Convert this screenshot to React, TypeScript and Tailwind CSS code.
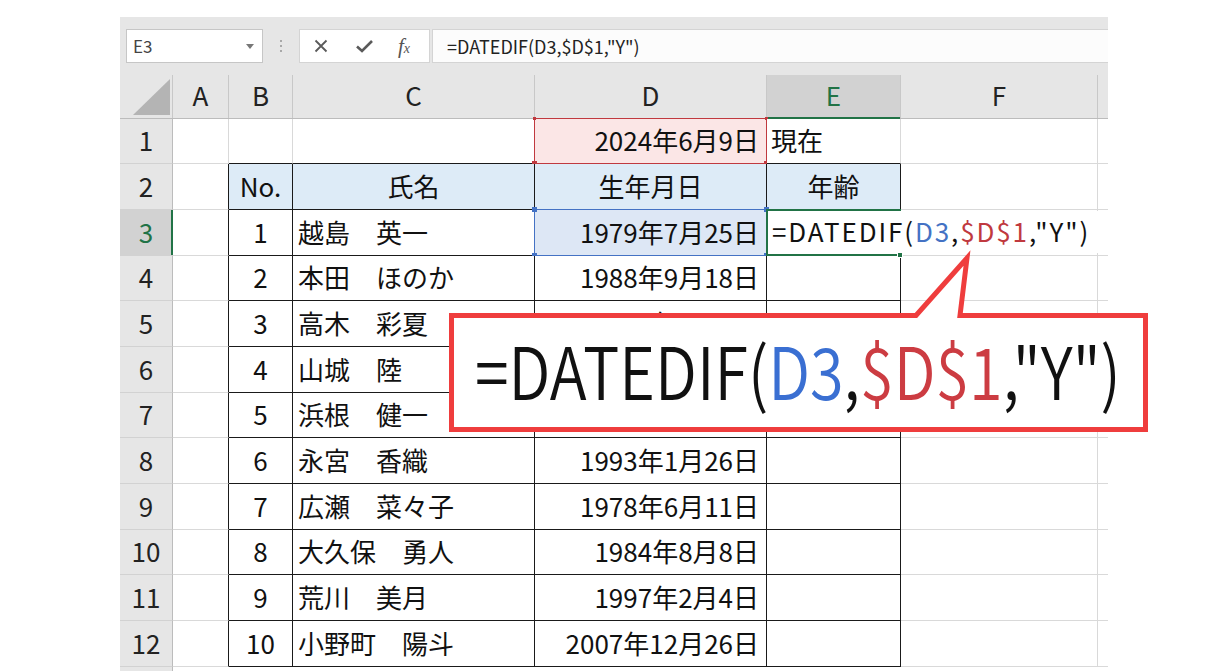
import React from "react";

const colW = ["w-[53px]", "w-[56px]", "w-[64px]", "w-[242px]", "w-[232px]", "w-[134px]", "w-[197px]", "w-[10px]"];
const rowH = ["h-[45px]", "h-[46px]", "h-[46px]", "h-[45px]", "h-[46px]", "h-[46px]", "h-[45px]", "h-[46px]", "h-[46px]", "h-[45px]", "h-[46px]", "h-[46px]"];
const letters = ["A", "B", "C", "D", "E", "F", ""];

const names = ["越島　英一", "本田　ほのか", "高木　彩夏", "山城　陸", "浜根　健一", "永宮　香織", "広瀬　菜々子", "大久保　勇人", "荒川　美月", "小野町　陽斗"];
const dates = ["1979年7月25日", "1988年9月18日", "1975年3月8日", "", "", "1993年1月26日", "1978年6月11日", "1984年8月8日", "1997年2月4日", "2007年12月26日"];

const inTable = (r: number, c: number) => r >= 2 && r <= 12 && c >= 2 && c <= 5;

function Formula({ big }: { big?: boolean }) {
  return (
    <>
      <span>=DATEDIF(</span>
      <span className={big ? "text-[#3a6fd2]" : "text-[#4472c4]"}>D3</span>
      <span>,</span>
      <span className={big ? "text-[#cc3c42]" : "text-[#c0393f]"}>$D$1</span>
      <span>,"Y")</span>
    </>
  );
}

function CellContent({ r, c }: { r: number; c: number }) {
  if (r === 1 && c === 4) return <div className="flex h-full items-center justify-end pb-[3px] pr-[7px]">2024年6月9日</div>;
  if (r === 1 && c === 5) return <div className="flex h-full items-center pb-[3px] pl-[4px]">現在</div>;
  if (r === 2) {
    const t = ["", "", "No.", "氏名", "生年月日", "年齢"][c] || "";
    return <div className="flex h-full items-center justify-center pb-[3px]">{t}</div>;
  }
  if (r >= 3) {
    const i = r - 3;
    if (c === 2) return <div className="flex h-full items-center justify-center pb-[3px]">{i + 1}</div>;
    if (c === 3) return <div className="flex h-full items-center whitespace-nowrap pb-[3px] pl-[5px]">{names[i]}</div>;
    if (c === 4 && dates[i]) return <div className="flex h-full items-center justify-end whitespace-nowrap pb-[3px] pr-[7px]">{dates[i]}</div>;
  }
  return null;
}

function Cell({ r, c }: { r: number; c: number }) {
  const rb = inTable(r, c) || inTable(r, c + 1);
  const bb = inTable(r, c) || inTable(r + 1, c);
  let bg = "bg-white";
  if (r === 2 && c >= 2 && c <= 5) bg = "bg-[#ddebf7]";
  if (r === 1 && c === 4) bg = "bg-[#fbe6e6]";
  if (r === 3 && c === 4) bg = "bg-[#dde7f5]";
  const isLast = c === 7;
  return (
    <div
      className={`${colW[c]} ${rowH[r - 1]} ${bg} relative shrink-0 border-b ${isLast ? "" : "border-r"} ${rb ? "border-r-[#1a1a1a]" : "border-r-[#d9d9d9]"} ${bb ? "border-b-[#1a1a1a]" : "border-b-[#d9d9d9]"}`}
    >
      <CellContent r={r} c={c} />
      {r === 1 && c === 4 && (
        <div className="pointer-events-none absolute -left-px -top-px -right-px -bottom-px border border-[#c0393f]">
          <div className="absolute -left-[3px] -bottom-[3px] h-[5px] w-[5px] bg-[#c0393f]" />
          <div className="absolute -right-[3px] -bottom-[3px] h-[5px] w-[5px] bg-[#c0393f]" />
          <div className="absolute -left-[2px] -top-[2px] h-[3px] w-[3px] bg-[#c0393f]" />
          <div className="absolute -right-[2px] -top-[2px] h-[3px] w-[3px] bg-[#c0393f]" />
        </div>
      )}
      {r === 3 && c === 4 && (
        <div className="pointer-events-none absolute -left-px -top-px -right-px -bottom-px border border-[#4472c4]">
          <div className="absolute -left-[3px] -top-[3px] h-[5px] w-[5px] bg-[#4472c4]" />
          <div className="absolute -right-[3px] -top-[3px] h-[5px] w-[5px] bg-[#4472c4]" />
          <div className="absolute -left-[3px] -bottom-[3px] h-[5px] w-[5px] bg-[#4472c4]" />
          <div className="absolute -right-[3px] -bottom-[3px] h-[5px] w-[5px] bg-[#4472c4]" />
        </div>
      )}
      {r === 3 && c === 5 && (
        <>
          <div className="pointer-events-none absolute -left-px -top-px -right-px -bottom-px z-10 border-2 border-[#217346]">
            <div className="absolute -right-[4px] -bottom-[4px] h-[6px] w-[6px] border border-white bg-[#217346]" />
          </div>
          <div className="absolute left-[1px] top-[1px] z-20 flex h-[42px] items-center whitespace-nowrap bg-white pb-[3px] pl-[4px] pr-[8px] tracking-[1.9px]">
            <Formula />
          </div>
        </>
      )}
    </div>
  );
}

export default function App() {
  const font = "font-['Noto_Sans_CJK_JP','Noto_Sans',sans-serif]";
  return (
    <div className={`relative h-[671px] w-[1229px] overflow-hidden bg-white pl-[120px] pt-[17px] ${font}`}>
      <div className="w-[988px] bg-[#e6e6e6]">
        {/* formula bar */}
        <div className="flex h-[58px] items-start pt-[12px]">
          <div className="ml-[6px] flex h-[34px] w-[137px] items-center justify-between border border-[#c6c6c6] bg-white pl-[6px] pr-[8px] text-[17px] text-[#444]">
            <span>E3</span>
            <svg width="8" height="5" viewBox="0 0 8 5"><path d="M0 0 L8 0 L4 5 Z" fill="#777" /></svg>
          </div>
          <div className="flex h-[34px] w-[36px] flex-col items-center justify-center gap-[3px]">
            <div className="h-[2px] w-[2px] bg-[#a8a8a8]" />
            <div className="h-[2px] w-[2px] bg-[#a8a8a8]" />
            <div className="h-[2px] w-[2px] bg-[#a8a8a8]" />
          </div>
          <div className="flex h-[34px] w-[131px] items-center border border-[#d4d4d4] bg-white">
            <svg className="ml-[14px]" width="14" height="14" viewBox="0 0 14 14">
              <path d="M1.5 1.5 L12.5 12.5 M12.5 1.5 L1.5 12.5" stroke="#5a5a5a" strokeWidth="1.8" />
            </svg>
            <svg className="ml-[28px]" width="17" height="14" viewBox="0 0 17 14">
              <path d="M1 7.5 L6 12 L16 2" stroke="#5a5a5a" strokeWidth="2.6" fill="none" />
            </svg>
            <span className="ml-[25px] font-['Liberation_Serif',serif] text-[21px] italic leading-none text-[#555]">
              f<span className="text-[14px]">x</span>
            </span>
          </div>
          <div className="ml-[2px] flex h-[34px] flex-1 items-center border-y border-l border-[#d4d4d4] bg-[#fcfcfc] pl-[14px] text-[18px] text-[#222]">
            =DATEDIF(D3,$D$1,"Y")
          </div>
        </div>
        {/* column header */}
        <div className="flex h-[44px] border-b border-[#bcbcbc] text-[26px] text-[#222]">
          <div className="relative w-[53px] shrink-0 border-r border-[#c8c8c8]">
            <svg className="absolute right-[2px] bottom-[3px]" width="37" height="36" viewBox="0 0 37 36">
              <path d="M37 0 L37 36 L0 36 Z" fill="#b4b4b4" />
            </svg>
          </div>
          {letters.map((l, i) => (
            <div
              key={i}
              className={`${colW[i + 1]} relative flex shrink-0 items-center justify-center pb-[4px] ${i < 6 ? "border-r border-[#c8c8c8]" : ""} ${l === "E" ? "bg-[#d2d2d2] text-[#217346]" : ""}`}
            >
              {l}
              {l === "E" && <div className="absolute left-0 right-0 -bottom-px h-[2px] bg-[#217346]" />}
            </div>
          ))}
        </div>
        {/* rows */}
        <div className="text-[26px] text-[#111]">
          {rowH.map((h, ri) => {
            const r = ri + 1;
            return (
              <div key={r} className="flex">
                <div
                  className={`${h} relative flex w-[53px] shrink-0 items-center justify-center border-b border-r border-b-[#d2d2d2] border-r-[#bcbcbc] pb-[3px] ${r === 3 ? "bg-[#d2d2d2] text-[#217346]" : "bg-[#e6e6e6] text-[#222]"}`}
                >
                  {r}
                  {r === 3 && <div className="absolute -right-px top-0 bottom-0 w-[2px] bg-[#217346]" />}
                </div>
                {[1, 2, 3, 4, 5, 6, 7].map((c) => (
                  <Cell key={c} r={r} c={c} />
                ))}
              </div>
            );
          })}
          <div className="flex h-[10px]">
            <div className="w-[53px] shrink-0 border-r border-[#bcbcbc] bg-[#e6e6e6]" />
            <div className="flex-1 bg-white" />
          </div>
        </div>
      </div>

      {/* callout */}
      <svg className="pointer-events-none absolute left-0 top-0 z-30" width="1229" height="671" viewBox="0 0 1229 671">
        <path
          d="M451.5 315.5 L916 315.5 L967 258 L960 315.5 L1145.5 315.5 L1145.5 429.5 L451.5 429.5 Z"
          fill="#ffffff"
          stroke="#ef3d3d"
          strokeWidth="5"
          strokeLinejoin="miter"
        />
      </svg>
      <div className="pointer-events-none absolute left-[454px] top-[318px] z-40 flex h-[109px] w-[689px] items-center pb-[8px] pl-[21px]">
        <div className="origin-left scale-x-[0.85] whitespace-nowrap text-[72px] font-[350] leading-none text-[#111]">
          <Formula big />
        </div>
      </div>
    </div>
  );
}
